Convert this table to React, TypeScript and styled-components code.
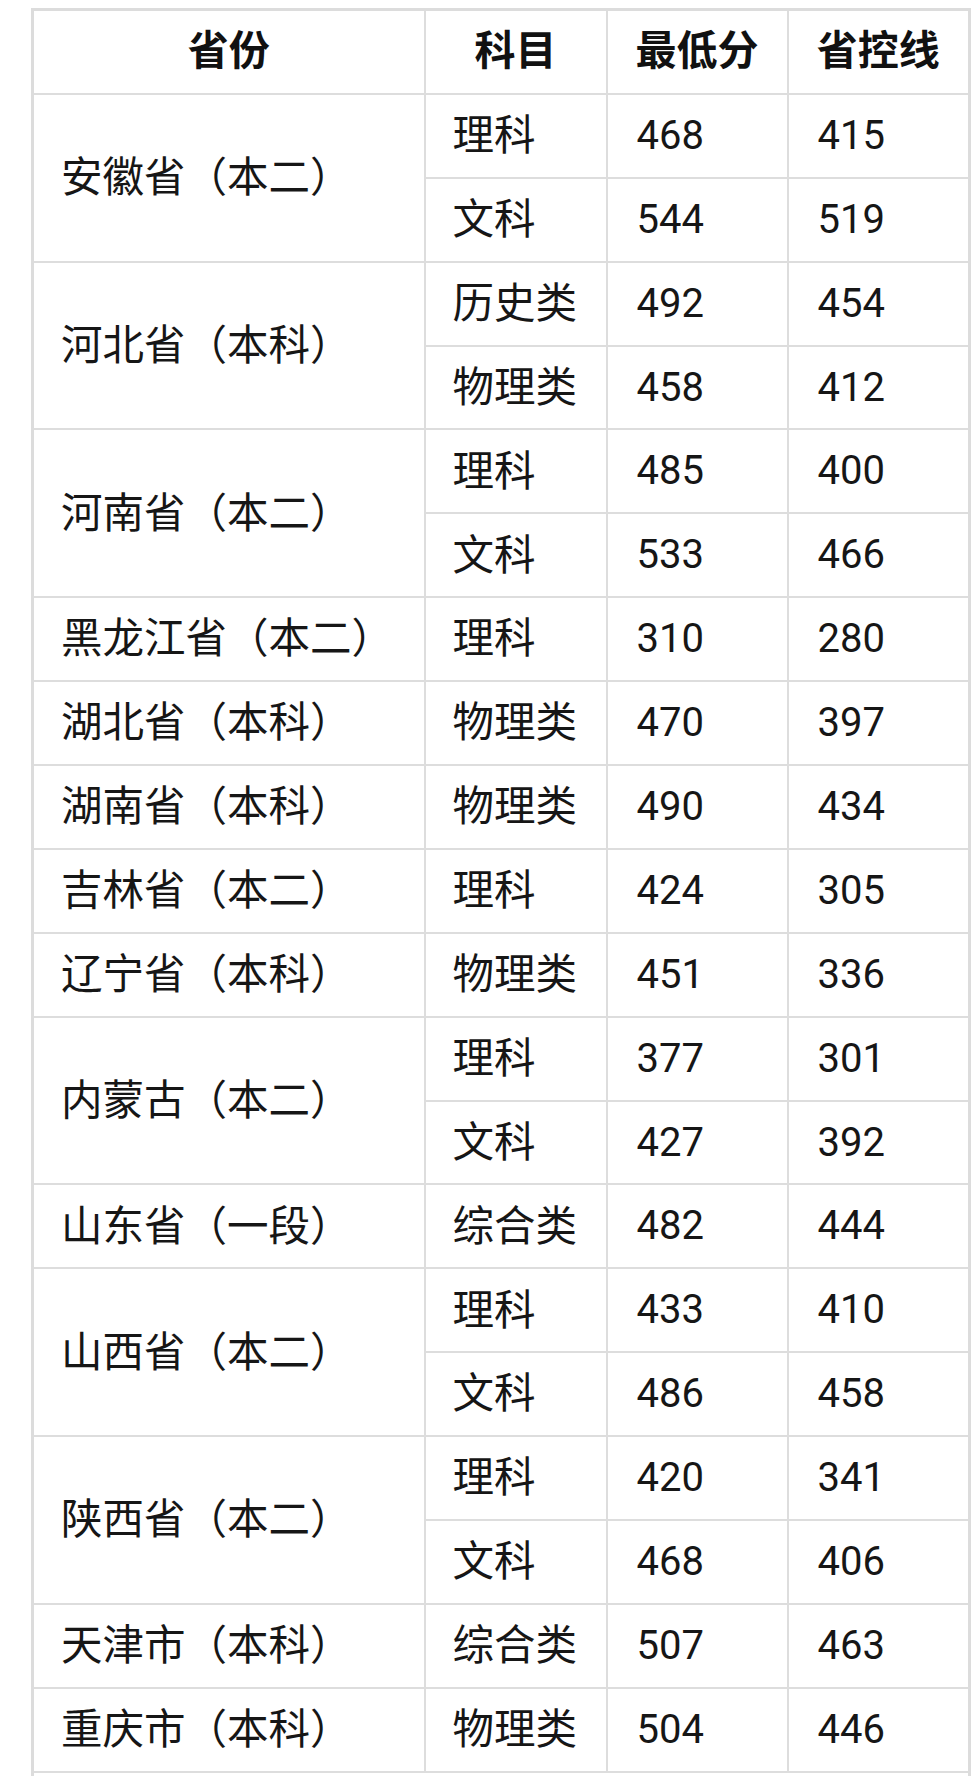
import React from 'react';
import styled, { createGlobalStyle } from 'styled-components';

const GlobalStyle = createGlobalStyle`
  html, body {
    margin: 0;
    padding: 0;
    background: #ffffff;
  }
  body {
    font-family: Roboto, "Noto Sans CJK SC", sans-serif;
    color: #161616;
  }
`;

const Page = styled.div`
  padding: 8px 0 0 31px;
`;

const ScoreTable = styled.table`
  width: 937px;
  table-layout: fixed;
  border-collapse: collapse;
  border: 3px solid #dcdcdc;
  line-height: 1;
`;

const HeadCell = styled.th`
  height: 81.9px;
  padding: 0;
  border: 2px solid #dddddd;
  font-size: 41px;
  font-weight: 700;
  text-align: center;
  color: #111111;
`;

const Cell = styled.td<{ $numeric?: boolean }>`
  height: 81.9px;
  padding: 0 0 0 ${p => (p.$numeric ? 29 : 27)}px;
  border: 2px solid #dddddd;
  font-size: ${p => (p.$numeric ? 40 : 41.5)}px;
  text-align: left;
  vertical-align: middle;
  font-weight: 400;
  white-space: nowrap;
`;

const NoteCell = styled.td`
  height: 81.9px;
  border: 2px solid #dddddd;
`;

type TScoreRow = {
    subject: string;
    min: number;
    line: number;
}

type TProvince = {
    name: string;
    rows: TScoreRow[];
}

const provinces: TProvince[] = [
    { name: '安徽省（本二）', rows: [{ subject: '理科', min: 468, line: 415 }, { subject: '文科', min: 544, line: 519 }] },
    { name: '河北省（本科）', rows: [{ subject: '历史类', min: 492, line: 454 }, { subject: '物理类', min: 458, line: 412 }] },
    { name: '河南省（本二）', rows: [{ subject: '理科', min: 485, line: 400 }, { subject: '文科', min: 533, line: 466 }] },
    { name: '黑龙江省（本二）', rows: [{ subject: '理科', min: 310, line: 280 }] },
    { name: '湖北省（本科）', rows: [{ subject: '物理类', min: 470, line: 397 }] },
    { name: '湖南省（本科）', rows: [{ subject: '物理类', min: 490, line: 434 }] },
    { name: '吉林省（本二）', rows: [{ subject: '理科', min: 424, line: 305 }] },
    { name: '辽宁省（本科）', rows: [{ subject: '物理类', min: 451, line: 336 }] },
    { name: '内蒙古（本二）', rows: [{ subject: '理科', min: 377, line: 301 }, { subject: '文科', min: 427, line: 392 }] },
    { name: '山东省（一段）', rows: [{ subject: '综合类', min: 482, line: 444 }] },
    { name: '山西省（本二）', rows: [{ subject: '理科', min: 433, line: 410 }, { subject: '文科', min: 486, line: 458 }] },
    { name: '陕西省（本二）', rows: [{ subject: '理科', min: 420, line: 341 }, { subject: '文科', min: 468, line: 406 }] },
    { name: '天津市（本科）', rows: [{ subject: '综合类', min: 507, line: 463 }] },
    { name: '重庆市（本科）', rows: [{ subject: '物理类', min: 504, line: 446 }] },
];

const App = (): React.ReactElement => {
    return (
    <Page>
        <GlobalStyle />
        <ScoreTable>
            <colgroup>
                <col style={{ width: 392 }} />
                <col style={{ width: 182 }} />
                <col style={{ width: 181 }} />
                <col style={{ width: 182 }} />
            </colgroup>
            <thead>
                <tr>
                    <HeadCell>省份</HeadCell>
                    <HeadCell>科目</HeadCell>
                    <HeadCell>最低分</HeadCell>
                    <HeadCell>省控线</HeadCell>
                </tr>
            </thead>
            <tbody>
                {provinces.map(p => p.rows.map((r, i) => (
                    <tr key={p.name + r.subject}>
                        {i === 0 && <Cell rowSpan={p.rows.length}>{p.name}</Cell>}
                        <Cell>{r.subject}</Cell>
                        <Cell $numeric>{r.min}</Cell>
                        <Cell $numeric>{r.line}</Cell>
                    </tr>
                )))}
                <tr>
                    <NoteCell colSpan={4} />
                </tr>
            </tbody>
        </ScoreTable>
    </Page>)
}

export default App;
